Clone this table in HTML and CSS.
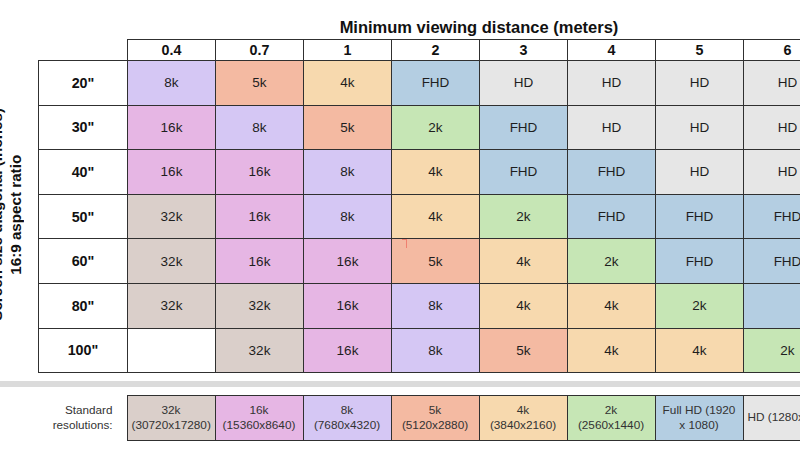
FILE: index.html
```html
<!DOCTYPE html>
<html lang="en">
<head>
<meta charset="utf-8">
<title>Resolution vs viewing distance</title>
<link rel="stylesheet" href="styles.css">
</head>
<body>
<div class="chart">
  <div class="title">Minimum viewing distance (meters)</div>
  <div class="main">
    <div class="axis"><div class="axis-text">Screen size diagonal (inches)<br>16:9 aspect ratio</div></div>
    <table class="grid">
      <colgroup><col class="c-label"><col class="c-val"><col class="c-val"><col class="c-val"><col class="c-val"><col class="c-val"><col class="c-val"><col class="c-val"><col class="c-val"></colgroup>
      <thead>
        <tr class="head"><th class="blank"></th><th>0.4</th><th>0.7</th><th>1</th><th>2</th><th>3</th><th>4</th><th>5</th><th>6</th></tr>
      </thead>
      <tbody>
        <tr><th>20"</th><td class="k8">8k</td><td class="k5">5k</td><td class="k4">4k</td><td class="fhd">FHD</td><td class="hd">HD</td><td class="hd">HD</td><td class="hd">HD</td><td class="hd">HD</td></tr>
        <tr><th>30"</th><td class="k16">16k</td><td class="k8">8k</td><td class="k5">5k</td><td class="k2">2k</td><td class="fhd">FHD</td><td class="hd">HD</td><td class="hd">HD</td><td class="hd">HD</td></tr>
        <tr><th>40"</th><td class="k16">16k</td><td class="k16">16k</td><td class="k8">8k</td><td class="k4">4k</td><td class="fhd">FHD</td><td class="fhd">FHD</td><td class="hd">HD</td><td class="hd">HD</td></tr>
        <tr><th>50"</th><td class="k32">32k</td><td class="k16">16k</td><td class="k8">8k</td><td class="k4">4k</td><td class="k2">2k</td><td class="fhd">FHD</td><td class="fhd">FHD</td><td class="fhd">FHD</td></tr>
        <tr><th>60"</th><td class="k32">32k</td><td class="k16">16k</td><td class="k16">16k</td><td class="k5 mark">5k</td><td class="k4">4k</td><td class="k2">2k</td><td class="fhd">FHD</td><td class="fhd">FHD</td></tr>
        <tr><th>80"</th><td class="k32">32k</td><td class="k32">32k</td><td class="k16">16k</td><td class="k8">8k</td><td class="k4">4k</td><td class="k4">4k</td><td class="k2">2k</td><td class="fhd"></td></tr>
        <tr><th>100"</th><td class="empty"></td><td class="k32">32k</td><td class="k16">16k</td><td class="k8">8k</td><td class="k5">5k</td><td class="k4">4k</td><td class="k4">4k</td><td class="k2">2k</td></tr>
      </tbody>
    </table>
  </div>
  <div class="sep"></div>
  <table class="legend">
    <colgroup><col class="c-label"><col class="c-val"><col class="c-val"><col class="c-val"><col class="c-val"><col class="c-val"><col class="c-val"><col class="c-val"><col class="c-val"></colgroup>
    <tr>
      <th class="legend-label">Standard<br>resolutions:</th>
      <td class="k32">32k<br>(30720x17280)</td>
      <td class="k16">16k<br>(15360x8640)</td>
      <td class="k8">8k<br>(7680x4320)</td>
      <td class="k5">5k<br>(5120x2880)</td>
      <td class="k4">4k<br>(3840x2160)</td>
      <td class="k2">2k<br>(2560x1440)</td>
      <td class="fhd">Full HD (1920 x 1080)</td>
      <td class="hd nowrap">HD (1280x720)</td>
    </tr>
  </table>
</div>
</body>
</html>
```

FILE: styles.css
```css
html, body {
  margin: 0;
  padding: 0;
  overflow: hidden;
  background: #ffffff;
}

body {
  width: 800px;
  height: 450px;
  font-family: "Liberation Sans", Arial, sans-serif;
  color: #1e1e1e;
}

.chart {
  width: 800px;
}

.title {
  box-sizing: border-box;
  margin-left: 127px;
  width: 704px;
  height: 38.7px;
  padding-top: 18px;
  font-size: 16.5px;
  line-height: 18px;
  font-weight: bold;
  text-align: center;
  color: #111111;
  white-space: nowrap;
}

.main {
  display: flex;
}

.axis {
  box-sizing: border-box;
  width: 38px;
  flex: none;
  display: flex;
  align-items: center;
  justify-content: flex-end;
  padding-top: 16px;
}

.axis-text {
  writing-mode: vertical-rl;
  transform: rotate(180deg);
  font-size: 15.2px;
  line-height: 19px;
  font-weight: bold;
  text-align: center;
  white-space: nowrap;
  margin-right: 13px;
  color: #111111;
}

.grid, .legend {
  flex: none;
  border-collapse: collapse;
  table-layout: fixed;
  width: 793px;
}

.c-label { width: 89px; }
.c-val { width: 88px; }

.grid th, .grid td,
.legend th, .legend td {
  border: 1px solid #303030;
  padding: 0;
  text-align: center;
  vertical-align: middle;
}

.grid th {
  font-size: 14.3px;
  font-weight: bold;
  color: #111111;
}

.grid td {
  font-size: 13.5px;
}

.grid tr { height: 44.6px; }
.grid tr.head { height: 21.3px; }

.grid th.blank {
  border: none;
  background: transparent;
}

.sep {
  margin-top: 8px;
  height: 5.5px;
  background: #dbdbdb;
}

.legend {
  margin-top: 8px;
  margin-left: 38px;
}

.legend tr { height: 45px; }

.legend td {
  font-size: 11.8px;
  line-height: 14.5px;
  padding: 0 4px;
  color: #333333;
}

.legend th.legend-label {
  border: none;
  text-align: right;
  padding-right: 14px;
  font-weight: normal;
  font-size: 11.7px;
  line-height: 14.5px;
  color: #333333;
}

.legend td.nowrap {
  white-space: nowrap;
  text-align: left;
  padding-left: 4px;
}

.mark { position: relative; }
.mark::before {
  content: "";
  position: absolute;
  left: 10px;
  top: 0;
  width: 4px;
  height: 8px;
  border-top: 1px solid #f08070;
  border-right: 1px solid #f08070;
}

.k32 { background: #dacfca; }
.k16 { background: #e6b6e4; }
.k8  { background: #d5c7f4; }
.k5  { background: #f4baa2; }
.k4  { background: #f7d9ae; }
.k2  { background: #c6e6b5; }
.fhd { background: #b4cee2; }
.hd  { background: #e6e6e6; }
.empty { background: #ffffff; }
```
